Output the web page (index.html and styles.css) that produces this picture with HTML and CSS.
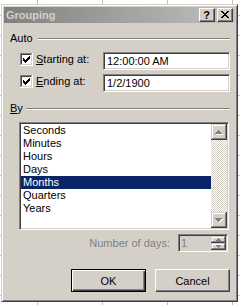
FILE: index.html
```html
<!DOCTYPE html>
<html>
<head>
<meta charset="utf-8">
<link rel="stylesheet" href="styles.css">
</head>
<body>
<div class="dialog">
  <div class="titlebar">
    <span class="title">Grouping</span>
    <div class="tbtns">
      <span class="tbtn help">?</span>
      <span class="tbtn close"><svg width="14" height="12" viewBox="0 0 14 12" shape-rendering="crispEdges"><path d="M3 2h2v1H3zM9 2h2v1H9zM4 3h2v1H4zM8 3h2v1H8zM5 4h4v1H5zM6 5h2v1H6zM5 6h4v1H5zM4 7h2v1H4zM8 7h2v1H8zM3 8h2v1H3zM9 8h2v1H9z" fill="#000"/></svg></span>
    </div>
  </div>
  <div class="client">
    <div class="ghead"><span>Auto</span><i class="etch"></i></div>
    <div class="frow">
      <svg class="chk" width="13" height="13" viewBox="0 0 13 13" shape-rendering="crispEdges"><rect width="13" height="13" fill="#fff"/><path d="M0 0h12v1H1v11H0z" fill="#808080"/><path d="M1 1h10v1H2v9H1z" fill="#404040"/><path d="M12 0h1v13H0v-1h12z" fill="#fff"/><path d="M11 1h1v11H1v-1h10z" fill="#d4d0c8"/><path d="M9 3h1v1H9zM8 4h2v1H8zM3 5h1v1H3zM7 5h3v1H7zM3 6h2v1H3zM6 6h3v1H6zM3 7h5v1H3zM4 8h3v1H4zM5 9h1v1H5z" fill="#000"/></svg>
      <span class="flabel"><u>S</u>tarting at:</span>
      <div class="edit">12:00:00 AM</div>
    </div>
    <div class="frow">
      <svg class="chk" width="13" height="13" viewBox="0 0 13 13" shape-rendering="crispEdges"><rect width="13" height="13" fill="#fff"/><path d="M0 0h12v1H1v11H0z" fill="#808080"/><path d="M1 1h10v1H2v9H1z" fill="#404040"/><path d="M12 0h1v13H0v-1h12z" fill="#fff"/><path d="M11 1h1v11H1v-1h10z" fill="#d4d0c8"/><path d="M9 3h1v1H9zM8 4h2v1H8zM3 5h1v1H3zM7 5h3v1H7zM3 6h2v1H3zM6 6h3v1H6zM3 7h5v1H3zM4 8h3v1H4zM5 9h1v1H5z" fill="#000"/></svg>
      <span class="flabel"><u>E</u>nding at:</span>
      <div class="edit">1/2/1900</div>
    </div>
    <div class="ghead by"><span><u>B</u>y</span><i class="etch"></i></div>
    <div class="list">
      <div class="items">
        <div class="item">Seconds</div>
        <div class="item">Minutes</div>
        <div class="item">Hours</div>
        <div class="item">Days</div>
        <div class="item sel">Months</div>
        <div class="item">Quarters</div>
        <div class="item">Years</div>
      </div>
      <div class="vscroll">
        <svg class="sbtn" width="16" height="16" viewBox="0 0 16 16" shape-rendering="crispEdges"><rect width="16" height="16" fill="#d4d0c8"/><path d="M1 1h13v1H2v12H1z" fill="#fff"/><path d="M15 0h1v16H0v-1h15z" fill="#404040"/><path d="M14 1h1v14H1v-1h13z" fill="#808080"/><path d="M8 7h1v1H8zM7 8h3v1H7zM6 9h5v1H6zM5 10h7v1H5z" fill="#fff"/><path d="M7 6h1v1H7zM6 7h3v1H6zM5 8h5v1H5zM4 9h7v1H4z" fill="#808080"/></svg>
        <div class="track"></div>
        <svg class="sbtn" width="16" height="16" viewBox="0 0 16 16" shape-rendering="crispEdges"><rect width="16" height="16" fill="#d4d0c8"/><path d="M1 1h13v1H2v12H1z" fill="#fff"/><path d="M15 0h1v16H0v-1h15z" fill="#404040"/><path d="M14 1h1v14H1v-1h13z" fill="#808080"/><path d="M5 7h7v1H5zM6 8h5v1H6zM7 9h3v1H7zM8 10h1v1H8z" fill="#fff"/><path d="M4 6h7v1H4zM5 7h5v1H5zM6 8h3v1H6zM7 9h1v1H7z" fill="#808080"/></svg>
      </div>
    </div>
    <div class="nrow">
      <span class="nlabel">Number of days:</span>
      <div class="spin">
        <span class="val">1</span>
        <div class="sbtns">
          <svg width="15" height="7" viewBox="0 0 15 7" shape-rendering="crispEdges"><rect width="15" height="7" fill="#d4d0c8"/><path d="M1 1h12v1H2v4H1z" fill="#fff"/><path d="M14 0h1v7H0V6h14z" fill="#404040"/><path d="M13 1h1v5H1V5h12z" fill="#808080"/><path d="M7 2h1v1H7zM6 3h3v1H6zM5 4h5v1H5z" fill="#808080"/></svg>
          <svg width="15" height="7" viewBox="0 0 15 7" shape-rendering="crispEdges"><rect width="15" height="7" fill="#d4d0c8"/><path d="M1 1h12v1H2v4H1z" fill="#fff"/><path d="M14 0h1v7H0V6h14z" fill="#404040"/><path d="M13 1h1v5H1V5h12z" fill="#808080"/><path d="M5 2h5v1H5zM6 3h3v1H6zM7 4h1v1H7z" fill="#808080"/></svg>
        </div>
      </div>
    </div>
    <div class="brow">
      <div class="btn def">OK</div>
      <div class="btn">Cancel</div>
    </div>
  </div>
</div>
</body>
</html>
```
FILE: styles.css
```css
* { box-sizing: border-box; }
html, body { margin: 0; padding: 0; }
body {
  display: flow-root;
  width: 240px;
  height: 305px;
  overflow: hidden;
  background-color: #fff;
  background-image:
    linear-gradient(to right, #c0c0c0 1px, transparent 1px),
    linear-gradient(to bottom, #c0c0c0 1px, transparent 1px);
  background-size: 65px 100%, 100% 20px;
  background-position: 37px 0, 0 15px;
  font-family: "Liberation Sans", Arial, sans-serif;
  font-size: 11px;
  color: #000;
}
.dialog {
  margin: 4px 0 0 1px;
  width: 237px;
  height: 298px;
  background: #d4d0c8;
  border: 1px solid;
  border-color: #d4d0c8 #404040 #404040 #d4d0c8;
  box-shadow: inset 1px 1px #fff, inset -1px -1px #808080;
  padding: 2px;
  display: flex;
  flex-direction: column;
}
.titlebar {
  height: 16px;
  display: flex;
  align-items: center;
  padding: 0 2px 0 2px;
  background: linear-gradient(to right, #808080, #c0c0c0);
}
.title {
  flex: 1;
  font-weight: bold;
  color: #d4d0c8;
  line-height: 16px;
}
.tbtns { display: flex; gap: 2px; }
.tbtn {
  width: 16px;
  height: 14px;
  background: #d4d0c8;
  border: 1px solid;
  border-color: #fff #404040 #404040 #fff;
  box-shadow: inset -1px -1px #808080;
  display: flex;
}
.tbtn svg { display: block; }
.help {
  justify-content: center;
  font-weight: bold;
  font-size: 11px;
  line-height: 12px;
  padding-right: 1px;
}
.client {
  flex: 1;
  display: flex;
  flex-direction: column;
}
.ghead {
  display: flex;
  align-items: center;
  height: 12px;
  line-height: 12px;
  margin-top: 9px;
  padding-left: 6px;
  padding-right: 5px;
}
.ghead.by { margin-top: 10px; }
.etch {
  flex: 1;
  height: 2px;
  margin-left: 5px;
  margin-top: 1px;
  border-top: 1px solid #808080;
  border-bottom: 1px solid #fff;
}
.by .etch { margin-left: 3px; }
.frow {
  display: flex;
  height: 18px;
  padding-left: 16px;
  margin-top: 8px;
}
.frow + .frow { margin-top: 4px; }
.chk { display: block; margin-top: 1px; flex: none; }
.flabel {
  width: 67px;
  margin-left: 3px;
  margin-top: 1px;
  line-height: 13px;
}
.edit {
  width: 127px;
  height: 18px;
  background: #fff;
  border: 1px solid;
  border-color: #808080 #fff #fff #808080;
  box-shadow: inset 1px 1px #404040, inset -1px -1px #d4d0c8;
  padding: 0 3px;
  line-height: 16px;
}
.list {
  margin: 8px 0 0 15px;
  width: 210px;
  height: 108px;
  display: flex;
  background: #fff;
  border: 1px solid;
  border-color: #808080 #fff #fff #808080;
  box-shadow: inset 1px 1px #404040, inset -1px -1px #d4d0c8;
  padding: 1px;
}
.items { flex: 1; }
.item {
  height: 13px;
  line-height: 13px;
  padding-left: 2px;
}
.item.sel { background: #0a246a; color: #fff; }
.vscroll {
  width: 16px;
  display: flex;
  flex-direction: column;
  background-color: #fff;
  background-image: repeating-conic-gradient(#d4d0c8 0 25%, #fff 0 50%);
  background-size: 2px 2px;
}
.sbtn { display: block; }
.track { flex: 1; }
.nrow {
  display: flex;
  justify-content: flex-end;
  align-items: center;
  height: 18px;
  margin-top: 4px;
  padding-right: 7px;
}
.nlabel {
  color: #808080;
  margin-right: 8px;
}
.spin {
  width: 50px;
  height: 18px;
  display: flex;
  background: #d4d0c8;
  border: 1px solid;
  border-color: #808080 #fff #fff #808080;
  box-shadow: inset 1px 1px #404040, inset -1px -1px #d4d0c8;
  padding: 1px;
}
.val {
  flex: 1;
  color: #808080;
  padding-left: 1px;
  line-height: 14px;
}
.sbtns { display: flex; flex-direction: column; }
.sbtns svg { display: block; }
.brow {
  display: flex;
  justify-content: flex-end;
  gap: 9px;
  margin-top: 17px;
  padding-right: 5px;
}
.btn {
  width: 75px;
  height: 23px;
  display: flex;
  align-items: center;
  justify-content: center;
  background: #d4d0c8;
  border: 1px solid;
  border-color: #fff #404040 #404040 #fff;
  box-shadow: inset -1px -1px #808080;
}
.btn.def {
  border-color: #000;
  box-shadow: inset 1px 1px #fff, inset -1px -1px #404040, inset -2px -2px #808080;
}
```
